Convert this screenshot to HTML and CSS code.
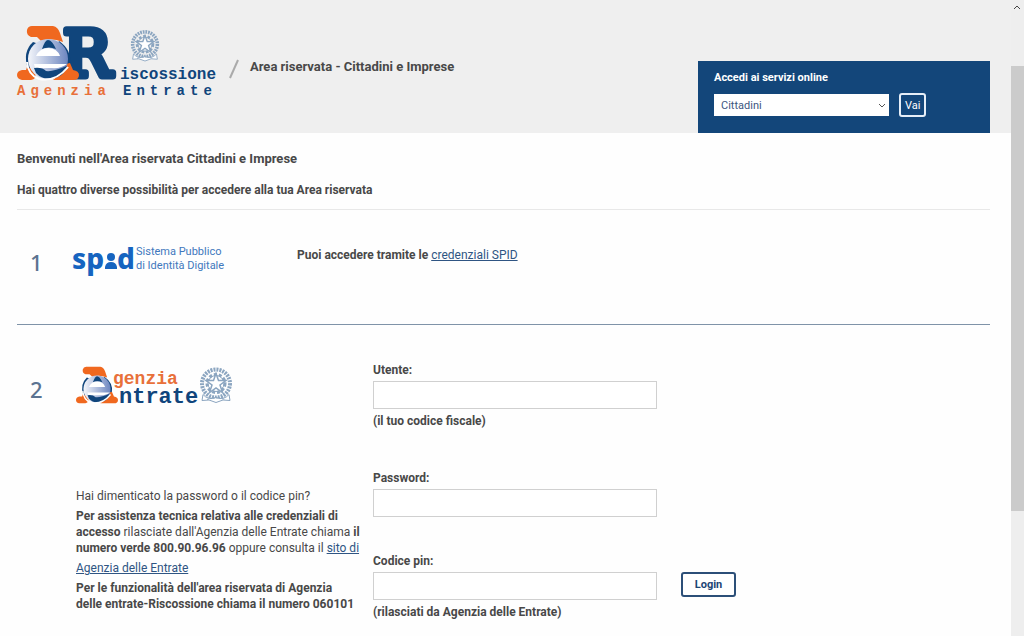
FILE: index.html
```html
<!DOCTYPE html>
<html lang="it">
<head>
    <meta charset="UTF-8">
    <meta name="viewport" content="width=device-width, initial-scale=1.0">
    <title>Area riservata - Cittadini e Imprese</title>
    <link rel="stylesheet" href="styles.css">
</head>
<body>
    <!-- Shared shapes for the two logos -->
    <svg class="defs" width="0" height="0" aria-hidden="true">
        <defs>
            <linearGradient id="globeShade" x1="0" y1="0" x2="1" y2="0">
                <stop offset="0" stop-color="#f4f6fb"/>
                <stop offset="1" stop-color="#6d86c0"/>
            </linearGradient>
            <symbol id="globe" viewBox="0 0 62 56">
                <path d="M15 1H36Q41 2 43 8L46 17Q34 12 24 16L20 12H14Q9 10 10 5Q11 1 15 1Z" fill="#f0681f"/>
                <path d="M12 36L18 47Q20 54 14 55H5Q0 54 0 50Q0 46 5 45H9Z" fill="#f0681f"/>
                <path d="M16 17Q5 27 11 44L19 38V18Z" fill="#10457c"/>
                <path d="M42 16Q55 25 53 39L47 42L40 20Z" fill="#10457c"/>
                <path d="M49 39L53 38L56 45Q62 46 62 50Q62 55 56 55H36L46 47Z" fill="#f0681f"/>
                <circle cx="31" cy="34" r="20" fill="url(#globeShade)"/>
                <path d="M25 24Q28 15 31 15Q35 15 39 24Q32 21 25 24Z" fill="#10457c"/>
                <path d="M19 31Q23 23 31 23Q40 23 43 31Z" fill="#fff"/>
                <path d="M17 39H50Q44 44 34 43Q25 43 18 43Z" fill="#fff"/>
                <path d="M17 43Q25 42 29 46Q36 47 50 41Q48 49 41 52Q27 57 19 48Z" fill="#10457c"/>
                <path d="M10 37Q11 50 22 54Q39 57 51 42" fill="none" stroke="#fff" stroke-width="2"/>
            </symbol>
            <symbol id="emblem" viewBox="0 0 34 38">
                <circle cx="17" cy="17" r="14" fill="none" stroke="currentColor" stroke-width="4" stroke-dasharray="2 1"/>
                <circle cx="17" cy="17" r="9" fill="none" stroke="currentColor" stroke-width="3" stroke-dasharray="3 2"/>
                <circle cx="17" cy="17" r="8" fill="none" stroke="currentColor" stroke-width="1"/>
                <path d="M17 7L19.500 14H27L21 18.500L23.500 26L17 21.500L10.500 26L13 18.500L7 14H14.500Z" fill="#fff" stroke="currentColor" stroke-width="1.500"/>
                <path d="M4 28Q9 34 17 31Q25 34 30 28L31 34Q24 32 17 36Q10 32 3 34Z" fill="#fff" stroke="currentColor"/>
                <path d="M8 33Q17 30 26 33" fill="none" stroke="currentColor" stroke-dasharray="2 1"/>
            </symbol>
        </defs>
    </svg>

    <div class="window">
        <div class="page">
            <header class="header">
                <svg class="logo" viewBox="0 0 202 76" role="img" aria-label="Agenzia Entrate Riscossione">
                    <text class="logo-r" x="46" y="51">R</text>
                    <use href="#globe" x="0" y="0" width="62" height="56"/>
                    <use href="#emblem" class="emblem" x="113" y="4" width="30" height="34"/>
                    <text class="logo-word" x="103" y="54">iscossione</text>
                    <text class="logo-name orange" x="0" y="70">Agenzia</text>
                    <text class="logo-name" x="106" y="70">Entrate</text>
                </svg>
                <svg class="slash" viewBox="0 0 10 20" aria-hidden="true"><path d="M1 19L9 1"/></svg>
                <h1>Area riservata - Cittadini e Imprese</h1>

                <form class="services">
                    <label for="service">Accedi ai servizi online</label>
                    <div class="services-row">
                        <div class="select-box">
                            <select id="service">
                                <option>Cittadini</option>
                                <option>Imprese</option>
                            </select>
                            <svg viewBox="0 0 8 5" aria-hidden="true"><path d="M1 1L4 4L7 1"/></svg>
                        </div>
                        <button type="submit">Vai</button>
                    </div>
                </form>
            </header>

            <main class="content">
                <div class="intro">
                    <h2>Benvenuti nell'Area riservata Cittadini e Imprese</h2>
                    <p>Hai quattro diverse possibilità per accedere alla tua Area riservata</p>
                </div>

                <section class="access spid">
                    <span class="number">1</span>
                    <svg class="spid-logo" viewBox="0 0 156 34" role="img" aria-label="SPID">
                        <text class="spid-word" x="-1" y="25">sp</text>
                        <circle cx="38" cy="13" r="4"/>
                        <path d="M32 25V23Q33 18 38 18Q43 18 44 23V25Z"/>
                        <text class="spid-word" x="44" y="25">d</text>
                        <text class="spid-text" x="63" y="11">Sistema Pubblico</text>
                        <text class="spid-text" x="63" y="25">di Identità Digitale</text>
                    </svg>
                    <p>Puoi accedere tramite le <a href="#">credenziali SPID</a></p>
                </section>

                <section class="access entrate">
                    <span class="number">2</span>
                    <div class="help">
                        <svg class="entrate-logo" viewBox="0 0 158 42" role="img" aria-label="Agenzia Entrate">
                            <use href="#globe" x="0" y="0" width="42" height="38"/>
                            <text class="entrate-word entrate-top orange" x="37" y="18">genzia</text>
                            <text class="entrate-word" x="43" y="37">ntrate</text>
                            <use href="#emblem" class="emblem" x="123" y="0" width="34" height="39"/>
                        </svg>
                        <p>Hai dimenticato la password o il codice pin?</p>
                        <p><strong>Per assistenza tecnica relativa alle credenziali di<br>
                            accesso</strong> rilasciate dall'Agenzia delle Entrate chiama <strong>il<br>
                            numero verde 800.90.96.96</strong> oppure consulta il <a href="#">sito di<br>
                            <span>Agenzia delle Entrate</span></a></p>
                        <p><strong>Per le funzionalità dell'area riservata di Agenzia<br>
                            delle entrate-Riscossione chiama il numero 060101</strong></p>
                    </div>

                    <form class="login">
                        <div class="field">
                            <label for="user">Utente:</label>
                            <input type="text" id="user">
                            <small>(il tuo codice fiscale)</small>
                        </div>
                        <div class="field">
                            <label for="password">Password:</label>
                            <input type="password" id="password">
                        </div>
                        <div class="field">
                            <label for="pin">Codice pin:</label>
                            <div class="pin-row">
                                <input type="password" id="pin">
                                <button type="submit">Login</button>
                            </div>
                            <small>(rilasciati da Agenzia delle Entrate)</small>
                        </div>
                    </form>
                </section>
            </main>
        </div>

        <div class="scrollbar" aria-hidden="true">
            <svg viewBox="0 0 8 5"><path d="M1 4L4 1L7 4"/></svg>
            <div class="thumb"></div>
        </div>
    </div>
</body>
</html>
```
FILE: styles.css
```css
* {
    box-sizing: border-box;
}

body {
    margin: 0;
    background: #fefefe;
    color: #484848;
    font-family: Roboto, Arial, sans-serif;
    font-size: 12px;
    line-height: 16px;
}

h1, h2, p {
    margin: 0;
}

a {
    color: #2f5583;
}

input, select, button {
    font-family: inherit;
    font-size: 12px;
}

.defs {
    position: absolute;
}

.window {
    display: flex;
    height: 100vh;
}

.page {
    flex: 1;
    overflow: hidden;
}

/* Header */
.header {
    display: flex;
    align-items: flex-start;
    padding: 25px 21px 0 17px;
    background: #efefef;
}

.logo {
    width: 202px;
    height: 76px;
    overflow: visible;
}

.logo text,
.entrate-word {
    fill: #10457c;
    font-family: "Liberation Mono", monospace;
    font-weight: bold;
}

/* Regular weight with a thick outline gives the rounded slabs */
.logo .logo-r {
    font-family: "DejaVu Serif", serif;
    font-size: 64px;
    font-weight: normal;
    stroke: #10457c;
    stroke-width: 7px;
    stroke-linejoin: round;
}

.logo .logo-word {
    font-size: 16px;
}

.logo .logo-name {
    font-size: 14px;
    letter-spacing: 5px;
}

.logo .orange,
.entrate-logo .orange {
    fill: #e8703a;
}

.emblem {
    color: #8ba5c0;
}

.slash {
    width: 10px;
    height: 20px;
    margin: 34px 11px 0 10px;
    fill: none;
    stroke: #aaa;
    stroke-width: 2px;
}

h1 {
    margin-top: 34px;
    font-size: 13px;
    font-weight: 700;
}

.services {
    width: 292px;
    height: 72px;
    margin: 36px 0 0 auto;
    padding: 9px 16px;
    background: #13467a;
    color: #fff;
}

.services label {
    display: block;
    font-size: 11px;
    font-weight: 700;
}

.services-row {
    display: flex;
    gap: 10px;
    margin-top: 7px;
}

.select-box {
    position: relative;
    width: 175px;
    height: 22px;
    margin-top: 1px;
}

.select-box select {
    width: 100%;
    height: 100%;
    padding: 0 7px;
    border: 0;
    background: #fff;
    color: #3d5680;
    font-size: 11px;
    appearance: none;
}

.select-box svg {
    position: absolute;
    top: 9px;
    right: 3px;
    width: 8px;
    height: 5px;
    fill: none;
    stroke: #555;
}

.services button {
    height: 24px;
    padding: 0 4px;
    border: 2px solid #e6eef8;
    border-radius: 3px;
    background: #13467a;
    color: #fff;
    font-size: 11px;
}

/* Content */
.content {
    padding: 0 21px 0 17px;
}

.intro {
    padding: 18px 0 11px;
    border-bottom: 1px solid #e8e8e8;
}

.intro h2 {
    margin-bottom: 15px;
    font-size: 13px;
    font-weight: 700;
}

.intro p,
.spid p {
    font-weight: 700;
}

.access {
    display: flex;
}

.number {
    color: #5b7391;
    font-family: "Noto Sans", sans-serif;
    font-size: 22px;
    font-weight: 500;
    line-height: 28px;
}

.spid {
    height: 115px;
    padding: 34px 0 0 13px;
    border-bottom: 1px solid #7f93a8;
}

.spid .number {
    width: 43px;
    margin-top: 4px;
}

.spid-logo {
    width: 156px;
    height: 34px;
    overflow: visible;
    fill: #1664c0;
}

.spid-word {
    font-family: "Noto Sans", sans-serif;
    font-size: 28px;
    font-weight: 800;
}

.spid-text {
    fill: #3f78bd;
    font-size: 11px;
}

.spid p {
    margin: 3px 0 0 68px;
}

.spid a {
    font-weight: 400;
}

.entrate {
    padding: 37px 0 0 13px;
}

.entrate .number {
    width: 46px;
    margin-top: 13px;
}

.help {
    width: 281px;
    margin-right: 16px;
    white-space: nowrap;
}

.entrate-logo {
    display: block;
    width: 158px;
    height: 42px;
    margin: 4px 0 80px;
    overflow: visible;
}

.entrate-word {
    font-size: 22px;
}

.entrate-top {
    font-size: 18px;
}

.help p {
    margin-bottom: 4px;
}

.help a span {
    display: inline-block;
    padding-top: 4px;
    text-decoration: underline;
}

/* Login form */
.login {
    width: 363px;
}

.field {
    display: flex;
    flex-direction: column;
    align-items: flex-start;
    margin-bottom: 41px;
    font-weight: 700;
}

.field label {
    margin-bottom: 3px;
}

.field input {
    width: 284px;
    height: 28px;
    padding: 0 6px;
    border: 1px solid #d0d0d0;
    background: #fff;
}

.field small {
    margin-top: 4px;
    font-size: 12px;
}

.field:nth-child(2) {
    margin-bottom: 36px;
}

.pin-row {
    display: flex;
    gap: 24px;
}

.pin-row button {
    width: 55px;
    height: 25px;
    padding: 0;
    border: 2px solid #2c4f78;
    border-radius: 3px;
    background: #fff;
    color: #1c4674;
    font-size: 11px;
    font-weight: 700;
}

/* Window scrollbar */
.scrollbar {
    display: flex;
    flex-direction: column;
    width: 13px;
    background: #eee;
}

.scrollbar svg {
    width: 8px;
    height: 5px;
    margin: 5px 2px 56px;
    fill: none;
    stroke: #444;
}

.thumb {
    height: 70%;
    background: #cbcbcb;
}
```
